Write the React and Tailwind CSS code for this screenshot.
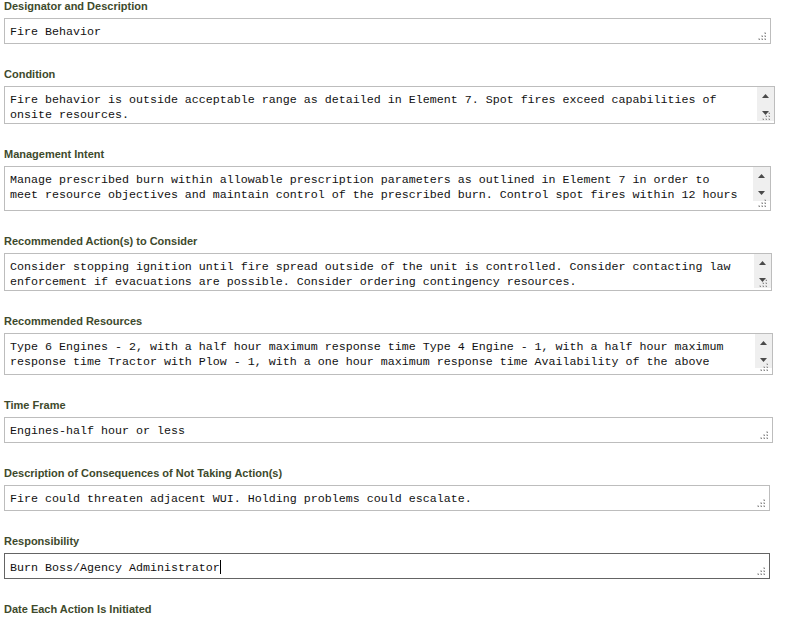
import React from "react";

const Grip = () => (
  <svg
    width="9"
    height="9"
    viewBox="0 0 9 9"
    className="absolute right-[3px] bottom-[2px]"
  >
    {[
      [6, 0],
      [3, 3],
      [6, 3],
      [0, 6],
      [3, 6],
      [6, 6],
    ].map(([x, y], i) => (
      <g key={i}>
        <rect x={x} y={y} width="2" height="2" fill="#d4d4d4" />
        <rect x={x + 1} y={y + 1} width="1" height="1" fill="#8a8a8a" />
      </g>
    ))}
  </svg>
);

const Scrollbar = () => (
  <div className="absolute right-0 top-0 w-[17px] h-[34px] flex flex-col bg-[#efefef]">
    <div className="h-[17px] flex items-center justify-center">
      <svg width="7" height="4" viewBox="0 0 7 4">
        <path d="M3.5 0 L7 4 L0 4 Z" fill="#4a4a4a" />
      </svg>
    </div>
    <div className="h-[17px] flex items-center justify-center">
      <svg width="7" height="4" viewBox="0 0 7 4">
        <path d="M0 0 L7 0 L3.5 4 Z" fill="#4a4a4a" />
      </svg>
    </div>
  </div>
);

const Field = ({ label, lines, w, h, scroll, focused, caret }) => (
  <div className="flex flex-col mb-[24px]">
    <div className="text-[11px] leading-[13px] font-bold text-[#3e4a2c] mb-[5px] font-['Liberation_Sans',Arial,sans-serif]">
      {label}
    </div>
    <div
      className={`relative bg-white border ${
        focused ? "border-[#646464]" : "border-[#bdbdbd]"
      }`}
      style={{ width: w, height: h }}
    >
      <div className="absolute inset-0 overflow-hidden pl-[5px] pt-[6px] font-['Liberation_Mono','Courier_New',monospace] text-[11.67px] leading-[15px] text-[#111]">
        {lines.map((l, i) => (
          <div key={i} className="whitespace-pre">
            {l}
            {caret && i === lines.length - 1 && (
              <span className="inline-block w-px h-[14px] bg-black align-[-3px]" />
            )}
          </div>
        ))}
      </div>
      {scroll && <Scrollbar />}
      <Grip />
    </div>
  </div>
);

export default function App() {
  return (
    <div className="w-[810px] h-[618px] overflow-hidden bg-white pl-[4px] pt-0">
      <Field label="Designator and Description" lines={["Fire Behavior"]} w={767} h={26} />
      <Field
        label="Condition"
        lines={[
          "Fire behavior is outside acceptable range as detailed in Element 7. Spot fires exceed capabilities of",
          "onsite resources.",
        ]}
        w={771}
        h={38}
        scroll
      />
      <Field
        label="Management Intent"
        lines={[
          "Manage prescribed burn within allowable prescription parameters as outlined in Element 7 in order to",
          "meet resource objectives and maintain control of the prescribed burn. Control spot fires within 12 hours",
        ]}
        w={767}
        h={45}
        scroll
      />
      <Field
        label="Recommended Action(s) to Consider"
        lines={[
          "Consider stopping ignition until fire spread outside of the unit is controlled. Consider contacting law",
          "enforcement if evacuations are possible. Consider ordering contingency resources.",
        ]}
        w={768}
        h={38}
        scroll
      />
      <Field
        label="Recommended Resources"
        lines={[
          "Type 6 Engines - 2, with a half hour maximum response time Type 4 Engine - 1, with a half hour maximum",
          "response time Tractor with Plow - 1, with a one hour maximum response time Availability of the above",
        ]}
        w={769}
        h={42}
        scroll
      />
      <Field label="Time Frame" lines={["Engines-half hour or less"]} w={769} h={26} />
      <Field
        label="Description of Consequences of Not Taking Action(s)"
        lines={["Fire could threaten adjacent WUI. Holding problems could escalate."]}
        w={766}
        h={26}
      />
      <Field
        label="Responsibility"
        lines={["Burn Boss/Agency Administrator"]}
        w={766}
        h={26}
        focused
        caret
      />
      <div className="text-[11px] leading-[13px] font-bold text-[#3e4a2c] font-['Liberation_Sans',Arial,sans-serif]">
        Date Each Action Is Initiated
      </div>
    </div>
  );
}
